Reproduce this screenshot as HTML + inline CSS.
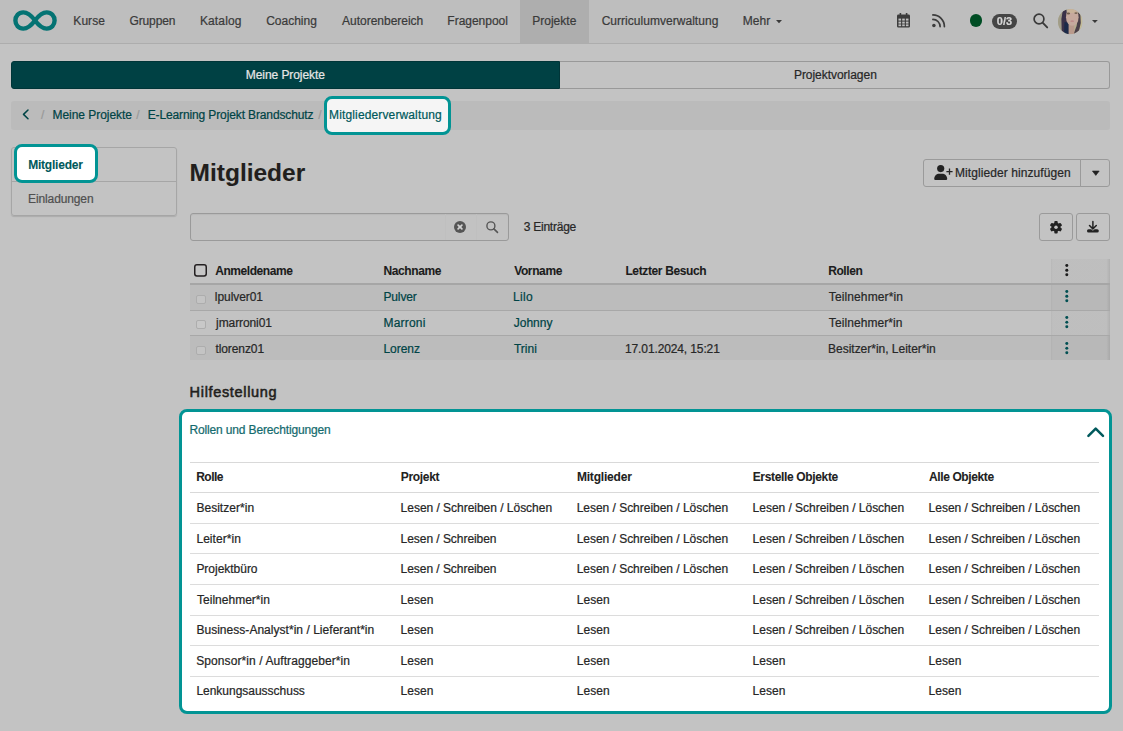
<!DOCTYPE html>
<html><head><meta charset="utf-8"><title>Mitglieder</title>
<style>
html,body{margin:0;padding:0}
html{background:#c3c3c3}
body{transform:translateZ(0);width:1123px;height:731px;background:#c3c3c3;position:relative;overflow:hidden;font-family:"Liberation Sans",sans-serif;font-size:13px;color:#272727}
.t{position:absolute;white-space:nowrap;display:block;-webkit-text-stroke:0.22px currentColor}
.b{position:absolute;box-sizing:border-box}
svg{position:absolute;overflow:visible}
</style></head><body>
<!-- navbar -->
<div class="b" style="left:0;top:0;width:1123px;height:44px;background:#bebebe;border-bottom:1px solid #adadad"></div>
<div class="b" style="left:520px;top:0;width:69px;height:43px;background:#aeaeae"></div>
<!-- logo -->
<svg style="left:12.8px;top:10px" width="44" height="21" viewBox="0 0 44 21"><path d="M22 10.5 C17.5 4.5 14 2.4 10.3 2.4 C5.6 2.4 2.4 6 2.4 10.5 C2.4 15 5.6 18.6 10.3 18.6 C14 18.6 17.5 16.5 22 10.5 C26.5 4.5 30 2.4 33.7 2.4 C38.4 2.4 41.6 6 41.6 10.5 C41.6 15 38.4 18.6 33.7 18.6 C30 18.6 26.5 16.5 22 10.5 Z" fill="none" stroke="#047373" stroke-width="4.4" stroke-linejoin="round"/></svg>
<!-- Mehr caret -->
<svg style="left:776.4px;top:19.6px" width="6" height="3.2" viewBox="0 0 6 3.2"><path d="M0 0H6L3 3.2Z" fill="#3a3a3a"/></svg>
<!-- calendar -->
<svg style="left:897px;top:13.4px" width="13" height="14.6" viewBox="0 0 13 14.6"><path d="M2.6 0h1.6v1.6h4.6V0h1.6v1.6h1.2a1.4 1.4 0 0 1 1.4 1.4v10.2a1.4 1.4 0 0 1-1.4 1.4H1.4A1.4 1.4 0 0 1 0 13.2V3A1.4 1.4 0 0 1 1.4 1.6h1.2Z" fill="#3c3c3c"/><g fill="#bebebe"><rect x="1.5" y="5.6" width="2.6" height="2"/><rect x="5.2" y="5.6" width="2.6" height="2"/><rect x="8.9" y="5.6" width="2.6" height="2"/><rect x="1.5" y="8.6" width="2.6" height="2"/><rect x="5.2" y="8.6" width="2.6" height="2"/><rect x="8.9" y="8.6" width="2.6" height="2"/><rect x="1.5" y="11.4" width="2.6" height="1.8"/><rect x="5.2" y="11.4" width="2.6" height="1.8"/><rect x="8.9" y="11.4" width="2.6" height="1.8"/></g></svg>
<!-- rss -->
<svg style="left:932px;top:14px" width="13.2" height="13.5" viewBox="0 0 13.2 13.5"><circle cx="1.9" cy="11.4" r="1.75" fill="#3c3c3c"/><path d="M0.9 5.4A7.2 7.2 0 0 1 8.1 12.6" fill="none" stroke="#3c3c3c" stroke-width="1.7" stroke-linecap="round"/><path d="M0.9 0.9A11.6 11.6 0 0 1 12.4 12.6" fill="none" stroke="#3c3c3c" stroke-width="1.7" stroke-linecap="round"/></svg>
<!-- status dot -->
<div class="b" style="left:970.2px;top:14.4px;width:12.2px;height:12.2px;border-radius:50%;background:#004d24"></div>
<!-- badge -->
<div class="b" style="left:992.1px;top:14px;width:24.9px;height:14.8px;border-radius:7.4px;background:#454545"></div>
<span class="t" style="left:992.1px;top:14px;width:24.9px;text-align:center;font-size:11px;line-height:14.8px;font-weight:700;color:#d6d6d6;will-change:transform">0/3</span>
<!-- search -->
<svg style="left:1032.6px;top:13px" width="15" height="15.2" viewBox="0 0 15 15.2"><circle cx="6" cy="6" r="4.9" fill="none" stroke="#3a3a3a" stroke-width="1.7"/><path d="M9.6 9.7L14.2 14.4" stroke="#3a3a3a" stroke-width="1.9" stroke-linecap="round"/></svg>
<!-- avatar -->
<svg style="left:1058.4px;top:8.7px" width="24.4" height="25.3" viewBox="0 0 24.4 25.3"><defs><clipPath id="av"><ellipse cx="12.2" cy="12.65" rx="12.2" ry="12.65"/></clipPath><filter id="bl" x="-10%" y="-10%" width="120%" height="120%"><feGaussianBlur stdDeviation="0.55"/></filter></defs><g clip-path="url(#av)"><rect width="24.4" height="25.3" fill="#b5ad90"/><g filter="url(#bl)"><rect x="0" y="0" width="5.5" height="25.3" fill="#a19d88"/><rect x="21.5" y="0" width="3" height="25.3" fill="#c4bc98"/><path d="M4.6 2.5L8.4 0L9 8L11.2 14L11.4 25.3H3.8L3.4 10Z" fill="#3b3149"/><path d="M6.5 13L11.2 14L11.4 25.3H6Z" fill="#1b2b49"/><path d="M19.8 3L22.4 5.5L22.8 14L20.5 24L15.5 25.3L18.6 17L20 9Z" fill="#4b4049"/><rect x="10.6" y="15" width="5.6" height="10.3" fill="#b99a8c"/><ellipse cx="14.3" cy="8.2" rx="6.3" ry="8.6" fill="#c6a99d"/><ellipse cx="13.6" cy="2" rx="4.5" ry="2" fill="#c9b39a"/><ellipse cx="10.4" cy="4.5" rx="1.7" ry="0.9" fill="#6e5c4a"/><ellipse cx="18" cy="4.1" rx="1.6" ry="0.9" fill="#756551"/><ellipse cx="14.2" cy="12.2" rx="1.8" ry="0.9" fill="#bf8c8a"/></g></g></svg>
<svg style="left:1092px;top:19.9px" width="5.8" height="3" viewBox="0 0 5.8 3"><path d="M0 0H5.8L2.9 3Z" fill="#3a3a3a"/></svg>

<!-- tabs -->
<div class="b" style="left:11px;top:61px;width:549px;height:28px;background:#004144;border:1px solid #003538;border-radius:3px 0 0 3px"></div>
<div class="b" style="left:560px;top:61px;width:550px;height:28px;border:1px solid #999;border-left:none;border-radius:0 3px 3px 0"></div>
<!-- breadcrumb -->
<div class="b" style="left:11px;top:101px;width:1099px;height:28.6px;background:#bbbbbb;border-radius:3px"></div>
<svg style="left:22.4px;top:109.3px" width="7" height="10.8" viewBox="0 0 7 10.8"><path d="M6 1L1.5 5.4L6 9.8" fill="none" stroke="#004446" stroke-width="1.5" stroke-linecap="round" stroke-linejoin="round"/></svg>
<div class="b" style="left:324px;top:96px;width:127px;height:38.8px;border:3.2px solid #029494;border-radius:8px;background:#f5f5f5"></div>

<!-- left menu -->
<div class="b" style="left:11.4px;top:147.3px;width:165.3px;height:68.9px;border:1px solid #a6a6a6;border-radius:3px;box-shadow:0 1px 1px rgba(0,0,0,.12)"></div>
<div class="b" style="left:12px;top:180.8px;width:164px;height:1px;background:#a6a6a6"></div>
<div class="b" style="left:14.2px;top:144.2px;width:83.7px;height:38.7px;border:3.2px solid #029494;border-radius:8px;background:#fff"></div>

<!-- add members button -->
<div class="b" style="left:923.2px;top:159.3px;width:158px;height:27.4px;border:1px solid #9a9a9a;border-radius:3px 0 0 3px"></div>
<div class="b" style="left:1080.2px;top:159.3px;width:29.5px;height:27.4px;border:1px solid #9a9a9a;border-radius:0 3px 3px 0"></div>
<svg style="left:933.8px;top:164.9px" width="18.6" height="15.2" viewBox="0 0 18.6 15.2"><circle cx="6.7" cy="3.6" r="3.6" fill="#222"/><path d="M0.2 14.1C0.2 10.7 2.7 8.8 5.3 8.8H8.1C10.7 8.8 13.2 10.7 13.2 14.1Q13.2 14.9 12.4 14.9H1Q0.2 14.9 0.2 14.1Z" fill="#222"/><path d="M15.5 3.5v6.2M12.4 6.6h6.2" stroke="#222" stroke-width="1.3"/></svg>
<svg style="left:1091.6px;top:171.2px" width="7.6" height="4.6" viewBox="0 0 7.6 4.6"><path d="M0.4 0H7.2L3.8 4.4Z" fill="#222" stroke="#222" stroke-width="0.6" stroke-linejoin="round"/></svg>

<!-- search input -->
<div class="b" style="left:190.4px;top:213px;width:318.4px;height:28px;border:1px solid #9a9a9a;border-radius:3px;background:#c2c2c2;box-shadow:inset 0 1px 1px rgba(0,0,0,.05)"></div>
<div class="b" style="left:444.6px;top:214px;width:1px;height:26px;background:#bfbfbf"></div>
<div class="b" style="left:475.6px;top:214px;width:1px;height:26px;background:#bfbfbf"></div>
<svg style="left:454px;top:220.7px" width="12" height="12" viewBox="0 0 12 12"><circle cx="6" cy="6" r="6" fill="#555"/><path d="M4.1 4.1L7.9 7.9M7.9 4.1L4.1 7.9" stroke="#d2d2d2" stroke-width="1.7" stroke-linecap="round"/></svg>
<svg style="left:485.7px;top:220.7px" width="12.2" height="12" viewBox="0 0 12.2 12"><circle cx="4.9" cy="4.9" r="4" fill="none" stroke="#555" stroke-width="1.4"/><path d="M7.9 7.9L11.5 11.4" stroke="#555" stroke-width="1.6" stroke-linecap="round"/></svg>
<!-- gear / download buttons -->
<div class="b" style="left:1039.4px;top:213px;width:33.4px;height:28px;border:1px solid #9a9a9a;border-radius:3px"></div>
<div class="b" style="left:1076.1px;top:213px;width:33.6px;height:28px;border:1px solid #9a9a9a;border-radius:3px"></div>
<svg style="left:1049.9px;top:220.6px" width="12" height="12.4" viewBox="-6 -6.2 12 12.4"><g fill="#222"><circle r="4.5"/><rect x="-1.7" y="-6.2" width="3.4" height="12.4" rx="0.9"/><rect x="-1.7" y="-6.2" width="3.4" height="12.4" rx="0.9" transform="rotate(60)"/><rect x="-1.7" y="-6.2" width="3.4" height="12.4" rx="0.9" transform="rotate(120)"/></g><circle r="1.75" fill="#c3c3c3"/></svg>
<svg style="left:1087px;top:221px" width="11.8" height="11.6" viewBox="0 0 11.8 11.6"><rect x="0" y="8.2" width="11.8" height="3.3" rx="1.6" fill="#222"/><path d="M3.6 5.6L5.9 7.9L8.2 5.6" fill="none" stroke="#c3c3c3" stroke-width="2.8" stroke-linejoin="miter"/><path d="M5.9 0.4v6.8M2.5 4.5L5.9 7.9L9.3 4.5" fill="none" stroke="#222" stroke-width="1.5" stroke-linejoin="miter" stroke-linecap="round"/></svg>

<!-- table -->
<div class="b" style="left:190.2px;top:285px;width:919.6px;height:25px;background:#bcbcbc"></div>
<div class="b" style="left:190.2px;top:336px;width:919.6px;height:24.4px;background:#bcbcbc"></div>
<div class="b" style="left:1051.4px;top:258.6px;width:58.4px;height:101.9px;background:linear-gradient(90deg,rgba(0,0,0,.06),rgba(0,0,0,.022) 3%,rgba(0,0,0,.022) 94%,rgba(0,0,0,.1))"></div>
<div class="b" style="left:190.2px;top:283px;width:919.6px;height:2px;background:#a6a6a6"></div>
<div class="b" style="left:190.2px;top:310px;width:919.6px;height:1px;background:#a8a8a8"></div>
<div class="b" style="left:190.2px;top:335px;width:919.6px;height:1px;background:#a8a8a8"></div>
<svg style="left:194px;top:264px" width="13" height="12.8" viewBox="0 0 13 12.8"><rect x="0.75" y="0.75" width="11.5" height="11.3" rx="2.2" fill="#c6c6c6" stroke="#231f20" stroke-width="1.5"/></svg>
<div class="b" style="left:196px;top:295px;width:9.7px;height:8.8px;border:1px solid #adadad;border-radius:2px;background:#c4c4c4"></div>
<div class="b" style="left:196px;top:320.2px;width:9.7px;height:8.8px;border:1px solid #adadad;border-radius:2px;background:#c8c8c8"></div>
<div class="b" style="left:196px;top:345.8px;width:9.7px;height:8.8px;border:1px solid #adadad;border-radius:2px;background:#c4c4c4"></div>
<svg style="left:1064.8px;top:264.4px" width="3.6" height="12.4" viewBox="0 0 3.6 12.4"><g fill="#1c1c1c"><circle cx="1.8" cy="1.6" r="1.5"/><circle cx="1.8" cy="6.2" r="1.5"/><circle cx="1.8" cy="10.8" r="1.5"/></g></svg>
<svg style="left:1064.8px;top:290.4px" width="3.6" height="12.4" viewBox="0 0 3.6 12.4"><g fill="#004f52"><circle cx="1.8" cy="1.6" r="1.5"/><circle cx="1.8" cy="6.2" r="1.5"/><circle cx="1.8" cy="10.8" r="1.5"/></g></svg>
<svg style="left:1064.8px;top:316.4px" width="3.6" height="12.4" viewBox="0 0 3.6 12.4"><g fill="#004f52"><circle cx="1.8" cy="1.6" r="1.5"/><circle cx="1.8" cy="6.2" r="1.5"/><circle cx="1.8" cy="10.8" r="1.5"/></g></svg>
<svg style="left:1064.8px;top:341.6px" width="3.6" height="12.4" viewBox="0 0 3.6 12.4"><g fill="#004f52"><circle cx="1.8" cy="1.6" r="1.5"/><circle cx="1.8" cy="6.2" r="1.5"/><circle cx="1.8" cy="10.8" r="1.5"/></g></svg>

<!-- help panel -->
<div class="b" style="left:178.8px;top:408.6px;width:933.3px;height:305.6px;border:3.2px solid #029494;border-radius:8px;background:#fff"></div>
<svg style="left:1086.7px;top:427.2px" width="17.4" height="10.4" viewBox="0 0 17.4 10.4"><path d="M1.4 9L8.7 1.7L16 9" fill="none" stroke="#00595c" stroke-width="2.5" stroke-linecap="round" stroke-linejoin="round"/></svg>
<div class="b" style="left:190px;top:462px;width:909px;height:1px;background:#d9d9d9"></div>
<div class="b" style="left:190px;top:492px;width:909px;height:1px;background:#d9d9d9"></div>
<div class="b" style="left:190px;top:523px;width:909px;height:1px;background:#dcdcdc"></div>
<div class="b" style="left:190px;top:553px;width:909px;height:1px;background:#dcdcdc"></div>
<div class="b" style="left:190px;top:584px;width:909px;height:1px;background:#dcdcdc"></div>
<div class="b" style="left:190px;top:615px;width:909px;height:1px;background:#dcdcdc"></div>
<div class="b" style="left:190px;top:645px;width:909px;height:1px;background:#dcdcdc"></div>
<div class="b" style="left:190px;top:676px;width:909px;height:1px;background:#dcdcdc"></div>

<span id="t0" class="t" style="left:73.35px;top:13px;font-size:12px;line-height:17px;font-weight:400;color:#3a3a3a;letter-spacing:0.051px;">Kurse</span>
<span id="t1" class="t" style="left:129.45px;top:13px;font-size:12px;line-height:17px;font-weight:400;color:#3a3a3a;letter-spacing:-0.111px;">Gruppen</span>
<span id="t2" class="t" style="left:199.90px;top:13px;font-size:12px;line-height:17px;font-weight:400;color:#3a3a3a;letter-spacing:0.140px;">Katalog</span>
<span id="t3" class="t" style="left:266.15px;top:13px;font-size:12px;line-height:17px;font-weight:400;color:#3a3a3a;letter-spacing:-0.001px;">Coaching</span>
<span id="t4" class="t" style="left:341.99px;top:13px;font-size:12px;line-height:17px;font-weight:400;color:#3a3a3a;letter-spacing:-0.007px;">Autorenbereich</span>
<span id="t5" class="t" style="left:447.36px;top:13px;font-size:12px;line-height:17px;font-weight:400;color:#3a3a3a;letter-spacing:-0.023px;">Fragenpool</span>
<span id="t6" class="t" style="left:532.27px;top:13px;font-size:12px;line-height:17px;font-weight:400;color:#3a3a3a;letter-spacing:0.003px;">Projekte</span>
<span id="t7" class="t" style="left:601.63px;top:13px;font-size:12px;line-height:17px;font-weight:400;color:#3a3a3a;letter-spacing:0.035px;">Curriculumverwaltung</span>
<span id="t8" class="t" style="left:742.69px;top:13px;font-size:12px;line-height:17px;font-weight:400;color:#3a3a3a;letter-spacing:0.052px;">Mehr</span>
<span id="t9" class="t" style="left:245.81px;top:67px;font-size:12px;line-height:17px;font-weight:400;color:#e6e6e6;letter-spacing:-0.073px;">Meine Projekte</span>
<span id="t10" class="t" style="left:793.92px;top:67px;font-size:12px;line-height:17px;font-weight:400;color:#272727;letter-spacing:-0.034px;">Projektvorlagen</span>
<span id="t11" class="t" style="left:40.90px;top:107px;font-size:12px;line-height:17px;font-weight:400;color:#999;letter-spacing:0.000px;">/</span>
<span id="t12" class="t" style="left:52.43px;top:107px;font-size:12px;line-height:17px;font-weight:400;color:#004446;letter-spacing:-0.033px;">Meine Projekte</span>
<span id="t13" class="t" style="left:136.20px;top:107px;font-size:12px;line-height:17px;font-weight:400;color:#999;letter-spacing:0.000px;">/</span>
<span id="t14" class="t" style="left:147.68px;top:107px;font-size:12px;line-height:17px;font-weight:400;color:#004446;letter-spacing:-0.123px;">E-Learning Projekt Brandschutz</span>
<span id="t15" class="t" style="left:318.20px;top:107px;font-size:12px;line-height:17px;font-weight:400;color:#999;letter-spacing:0.000px;">/</span>
<span id="t16" class="t" style="left:329.10px;top:107px;font-size:12px;line-height:17px;font-weight:400;color:#00595c;letter-spacing:0.133px;">Mitgliederverwaltung</span>
<span id="t17" class="t" style="left:28.16px;top:157px;font-size:12px;line-height:17px;font-weight:700;-webkit-text-stroke-width:.08px;color:#00595c;letter-spacing:-0.209px;">Mitglieder</span>
<span id="t18" class="t" style="left:28.10px;top:191px;font-size:12px;line-height:17px;font-weight:400;color:#505050;letter-spacing:-0.124px;">Einladungen</span>
<span id="t19" class="t" style="left:189.61px;top:156px;font-size:24.5px;line-height:34px;font-weight:700;-webkit-text-stroke-width:.08px;color:#221f1d;letter-spacing:-0.015px;">Mitglieder</span>
<span id="t20" class="t" style="left:954.98px;top:165px;font-size:12px;line-height:17px;font-weight:400;color:#272727;letter-spacing:0.083px;">Mitglieder hinzufügen</span>
<span id="t21" class="t" style="left:523.63px;top:219px;font-size:12px;line-height:17px;font-weight:400;color:#272727;letter-spacing:-0.231px;">3 Einträge</span>
<span id="t22" class="t" style="left:215.16px;top:263px;font-size:12px;line-height:17px;font-weight:700;-webkit-text-stroke-width:.08px;color:#1c1c1c;letter-spacing:-0.433px;">Anmeldename</span>
<span id="t23" class="t" style="left:383.62px;top:263px;font-size:12px;line-height:17px;font-weight:700;-webkit-text-stroke-width:.08px;color:#1c1c1c;letter-spacing:-0.420px;">Nachname</span>
<span id="t24" class="t" style="left:514.17px;top:263px;font-size:12px;line-height:17px;font-weight:700;-webkit-text-stroke-width:.08px;color:#1c1c1c;letter-spacing:-0.379px;">Vorname</span>
<span id="t25" class="t" style="left:625.38px;top:263px;font-size:12px;line-height:17px;font-weight:700;-webkit-text-stroke-width:.08px;color:#1c1c1c;letter-spacing:-0.364px;">Letzter Besuch</span>
<span id="t26" class="t" style="left:828.16px;top:263px;font-size:12px;line-height:17px;font-weight:700;-webkit-text-stroke-width:.08px;color:#1c1c1c;letter-spacing:-0.413px;">Rollen</span>
<span id="t27" class="t" style="left:214.87px;top:289px;font-size:12px;line-height:17px;font-weight:400;color:#272727;letter-spacing:-0.070px;">lpulver01</span>
<span id="t28" class="t" style="left:383.46px;top:289px;font-size:12px;line-height:17px;font-weight:400;color:#004446;letter-spacing:-0.137px;">Pulver</span>
<span id="t29" class="t" style="left:513.12px;top:289px;font-size:12px;line-height:17px;font-weight:400;color:#004446;letter-spacing:0.320px;">Lilo</span>
<span id="t30" class="t" style="left:828.82px;top:289px;font-size:12px;line-height:17px;font-weight:400;color:#272727;letter-spacing:0.117px;">Teilnehmer*in</span>
<span id="t31" class="t" style="left:216.07px;top:315px;font-size:12px;line-height:17px;font-weight:400;color:#272727;letter-spacing:-0.088px;">jmarroni01</span>
<span id="t32" class="t" style="left:383.45px;top:315px;font-size:12px;line-height:17px;font-weight:400;color:#004446;letter-spacing:0.199px;">Marroni</span>
<span id="t33" class="t" style="left:513.80px;top:315px;font-size:12px;line-height:17px;font-weight:400;color:#004446;letter-spacing:-0.023px;">Johnny</span>
<span id="t34" class="t" style="left:828.82px;top:315px;font-size:12px;line-height:17px;font-weight:400;color:#272727;letter-spacing:0.081px;">Teilnehmer*in</span>
<span id="t35" class="t" style="left:215.39px;top:341px;font-size:12px;line-height:17px;font-weight:400;color:#272727;letter-spacing:-0.079px;">tlorenz01</span>
<span id="t36" class="t" style="left:383.44px;top:341px;font-size:12px;line-height:17px;font-weight:400;color:#004446;letter-spacing:-0.040px;">Lorenz</span>
<span id="t37" class="t" style="left:513.91px;top:341px;font-size:12px;line-height:17px;font-weight:400;color:#004446;letter-spacing:0.036px;">Trini</span>
<span id="t38" class="t" style="left:625.03px;top:341px;font-size:12px;line-height:17px;font-weight:400;color:#272727;letter-spacing:-0.120px;">17.01.2024, 15:21</span>
<span id="t39" class="t" style="left:828.06px;top:341px;font-size:12px;line-height:17px;font-weight:400;color:#272727;letter-spacing:-0.017px;">Besitzer*in, Leiter*in</span>
<span id="t40" class="t" style="left:189.62px;top:382px;font-size:14.5px;line-height:20px;font-weight:400;color:#221f1d;letter-spacing:0.668px;-webkit-text-stroke-width:.55px;">Hilfestellung</span>
<span id="t41" class="t" style="left:189.48px;top:422px;font-size:12px;line-height:17px;font-weight:400;color:#146b6e;letter-spacing:-0.144px;">Rollen und Berechtigungen</span>
<span id="t42" class="t" style="left:196.18px;top:469px;font-size:12px;line-height:17px;font-weight:700;-webkit-text-stroke-width:.08px;color:#222;letter-spacing:-0.514px;">Rolle</span>
<span id="t43" class="t" style="left:400.71px;top:469px;font-size:12px;line-height:17px;font-weight:700;-webkit-text-stroke-width:.08px;color:#222;letter-spacing:-0.303px;">Projekt</span>
<span id="t44" class="t" style="left:576.90px;top:469px;font-size:12px;line-height:17px;font-weight:700;-webkit-text-stroke-width:.08px;color:#222;letter-spacing:-0.192px;">Mitglieder</span>
<span id="t45" class="t" style="left:752.71px;top:469px;font-size:12px;line-height:17px;font-weight:700;-webkit-text-stroke-width:.08px;color:#222;letter-spacing:-0.346px;">Erstelle Objekte</span>
<span id="t46" class="t" style="left:929.03px;top:469px;font-size:12px;line-height:17px;font-weight:700;-webkit-text-stroke-width:.08px;color:#222;letter-spacing:-0.392px;">Alle Objekte</span>
<span id="t47" class="t" style="left:196.40px;top:500px;font-size:12px;line-height:17px;font-weight:400;color:#262626;letter-spacing:0.032px;">Besitzer*in</span>
<span id="t48" class="t" style="left:400.61px;top:500px;font-size:12px;line-height:17px;font-weight:400;color:#262626;letter-spacing:-0.025px;">Lesen / Schreiben / Löschen</span>
<span id="t49" class="t" style="left:576.67px;top:500px;font-size:12px;line-height:17px;font-weight:400;color:#262626;letter-spacing:-0.024px;">Lesen / Schreiben / Löschen</span>
<span id="t50" class="t" style="left:752.61px;top:500px;font-size:12px;line-height:17px;font-weight:400;color:#262626;letter-spacing:-0.025px;">Lesen / Schreiben / Löschen</span>
<span id="t51" class="t" style="left:928.61px;top:500px;font-size:12px;line-height:17px;font-weight:400;color:#262626;letter-spacing:-0.025px;">Lesen / Schreiben / Löschen</span>
<span id="t52" class="t" style="left:196.40px;top:531px;font-size:12px;line-height:17px;font-weight:400;color:#262626;letter-spacing:0.065px;">Leiter*in</span>
<span id="t53" class="t" style="left:400.61px;top:531px;font-size:12px;line-height:17px;font-weight:400;color:#262626;letter-spacing:-0.050px;">Lesen / Schreiben</span>
<span id="t54" class="t" style="left:576.67px;top:531px;font-size:12px;line-height:17px;font-weight:400;color:#262626;letter-spacing:-0.024px;">Lesen / Schreiben / Löschen</span>
<span id="t55" class="t" style="left:752.61px;top:531px;font-size:12px;line-height:17px;font-weight:400;color:#262626;letter-spacing:-0.025px;">Lesen / Schreiben / Löschen</span>
<span id="t56" class="t" style="left:928.61px;top:531px;font-size:12px;line-height:17px;font-weight:400;color:#262626;letter-spacing:-0.025px;">Lesen / Schreiben / Löschen</span>
<span id="t57" class="t" style="left:196.40px;top:561px;font-size:12px;line-height:17px;font-weight:400;color:#262626;letter-spacing:-0.022px;">Projektbüro</span>
<span id="t58" class="t" style="left:400.61px;top:561px;font-size:12px;line-height:17px;font-weight:400;color:#262626;letter-spacing:-0.050px;">Lesen / Schreiben</span>
<span id="t59" class="t" style="left:576.67px;top:561px;font-size:12px;line-height:17px;font-weight:400;color:#262626;letter-spacing:-0.024px;">Lesen / Schreiben / Löschen</span>
<span id="t60" class="t" style="left:752.61px;top:561px;font-size:12px;line-height:17px;font-weight:400;color:#262626;letter-spacing:-0.025px;">Lesen / Schreiben / Löschen</span>
<span id="t61" class="t" style="left:928.61px;top:561px;font-size:12px;line-height:17px;font-weight:400;color:#262626;letter-spacing:-0.025px;">Lesen / Schreiben / Löschen</span>
<span id="t62" class="t" style="left:197.11px;top:592px;font-size:12px;line-height:17px;font-weight:400;color:#262626;letter-spacing:-0.000px;">Teilnehmer*in</span>
<span id="t63" class="t" style="left:400.61px;top:592px;font-size:12px;line-height:17px;font-weight:400;color:#262626;letter-spacing:0.016px;">Lesen</span>
<span id="t64" class="t" style="left:576.67px;top:592px;font-size:12px;line-height:17px;font-weight:400;color:#262626;letter-spacing:0.067px;">Lesen</span>
<span id="t65" class="t" style="left:752.61px;top:592px;font-size:12px;line-height:17px;font-weight:400;color:#262626;letter-spacing:-0.025px;">Lesen / Schreiben / Löschen</span>
<span id="t66" class="t" style="left:928.61px;top:592px;font-size:12px;line-height:17px;font-weight:400;color:#262626;letter-spacing:-0.025px;">Lesen / Schreiben / Löschen</span>
<span id="t67" class="t" style="left:196.40px;top:622px;font-size:12px;line-height:17px;font-weight:400;color:#262626;letter-spacing:0.033px;">Business-Analyst*in / Lieferant*in</span>
<span id="t68" class="t" style="left:400.61px;top:622px;font-size:12px;line-height:17px;font-weight:400;color:#262626;letter-spacing:0.016px;">Lesen</span>
<span id="t69" class="t" style="left:576.67px;top:622px;font-size:12px;line-height:17px;font-weight:400;color:#262626;letter-spacing:0.067px;">Lesen</span>
<span id="t70" class="t" style="left:752.61px;top:622px;font-size:12px;line-height:17px;font-weight:400;color:#262626;letter-spacing:-0.025px;">Lesen / Schreiben / Löschen</span>
<span id="t71" class="t" style="left:928.61px;top:622px;font-size:12px;line-height:17px;font-weight:400;color:#262626;letter-spacing:-0.025px;">Lesen / Schreiben / Löschen</span>
<span id="t72" class="t" style="left:196.20px;top:653px;font-size:12px;line-height:17px;font-weight:400;color:#262626;letter-spacing:0.088px;">Sponsor*in / Auftraggeber*in</span>
<span id="t73" class="t" style="left:400.61px;top:653px;font-size:12px;line-height:17px;font-weight:400;color:#262626;letter-spacing:0.016px;">Lesen</span>
<span id="t74" class="t" style="left:576.67px;top:653px;font-size:12px;line-height:17px;font-weight:400;color:#262626;letter-spacing:0.067px;">Lesen</span>
<span id="t75" class="t" style="left:752.61px;top:653px;font-size:12px;line-height:17px;font-weight:400;color:#262626;letter-spacing:0.016px;">Lesen</span>
<span id="t76" class="t" style="left:928.61px;top:653px;font-size:12px;line-height:17px;font-weight:400;color:#262626;letter-spacing:0.016px;">Lesen</span>
<span id="t77" class="t" style="left:196.40px;top:683px;font-size:12px;line-height:17px;font-weight:400;color:#262626;letter-spacing:-0.016px;">Lenkungsausschuss</span>
<span id="t78" class="t" style="left:400.61px;top:683px;font-size:12px;line-height:17px;font-weight:400;color:#262626;letter-spacing:0.016px;">Lesen</span>
<span id="t79" class="t" style="left:576.67px;top:683px;font-size:12px;line-height:17px;font-weight:400;color:#262626;letter-spacing:0.067px;">Lesen</span>
<span id="t80" class="t" style="left:752.61px;top:683px;font-size:12px;line-height:17px;font-weight:400;color:#262626;letter-spacing:0.016px;">Lesen</span>
<span id="t81" class="t" style="left:928.61px;top:683px;font-size:12px;line-height:17px;font-weight:400;color:#262626;letter-spacing:0.016px;">Lesen</span>
</body></html>
